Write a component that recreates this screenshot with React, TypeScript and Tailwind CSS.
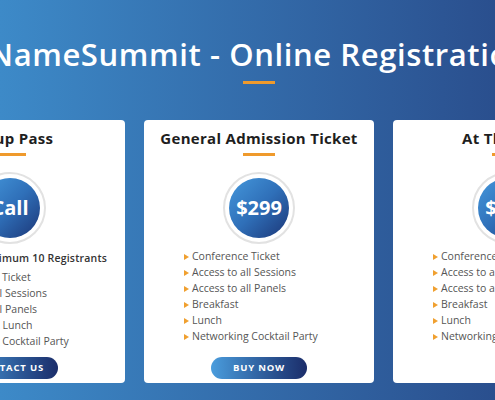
import React from "react";

const font = { fontFamily: '"Open Sans", "Liberation Sans", sans-serif' };

function Bullet() {
  return (
    <svg width="5" height="6" viewBox="0 0 5 6" className="shrink-0">
      <polygon points="0,0 5,3 0,6" fill="#f0a030" />
    </svg>
  );
}

type CardProps = {
  title: string;
  price: string;
  items: string[];
  lead?: string;
  button?: string;
};

function Card({ title, price, items, lead, button }: CardProps) {
  return (
    <div className="w-[230px] h-[263px] shrink-0 bg-white rounded-[4px] flex flex-col items-center">
      <div className="mt-[8px] text-[15px] font-bold tracking-[0.3px] text-[#1e1e1e] leading-[20px] whitespace-nowrap">{title}</div>
      <div className="mt-[5px] w-[32px] h-[3px] bg-[#ef9a2c]" />
      <div className="mt-[16px] w-[72px] h-[72px] rounded-full border-[2px] border-[#e2e2e2] bg-white flex items-center justify-center">
        <div className="w-[60px] h-[60px] rounded-full bg-linear-to-br from-[#4598dc] via-[#2f6fb8] to-[#1c3778] flex items-center justify-center">
          <span className="text-white text-[20px] font-bold leading-none">{price}</span>
        </div>
      </div>
      <div className="flex-1 w-full pl-[40px] mt-[5px]">
        {lead && (
          <div className="ml-[44px] text-[10.5px] font-semibold tracking-[0.2px] text-[#333] leading-[16px] mt-[1px] mb-[4px] whitespace-nowrap">{lead}</div>
        )}
        <ul className="flex flex-col">
          {items.map((t) => (
            <li key={t} className="flex items-center gap-[3px] h-[16px] text-[10.5px] text-[#555] font-medium whitespace-nowrap">
              <Bullet />
              <span>{t}</span>
            </li>
          ))}
        </ul>
      </div>
      {button ? (
        <div className="mb-[4px] w-[96px] h-[22px] rounded-full bg-linear-to-r from-[#4a9ddd] to-[#1b2d6a] flex items-center justify-center">
          <span className="text-white text-[9.5px] font-bold tracking-[0.8px]">{button}</span>
        </div>
      ) : (
        <div className="mb-[4px] h-[22px]" />
      )}
    </div>
  );
}

export default function App() {
  const base = ["Conference Ticket", "Access to all Sessions", "Access to all Panels", "Breakfast", "Lunch", "Networking Cocktail Party"];
  return (
    <div className="w-[495px] h-[400px] overflow-hidden bg-linear-to-r from-[#3d8ac8] to-[#2a4f8e]" style={font}>
      <div className="ml-[-105px] w-[728px] flex flex-col items-center">
        <h1 className="mt-[36px] text-[31px] font-semibold tracking-[0.6px] text-white leading-[36px] whitespace-nowrap">NameSummit - Online Registration</h1>
        <div className="mt-[9px] w-[32px] h-[3px] bg-[#ef9a2c]" />
        <div className="mt-[36px] flex gap-[19px]">
          <Card
            title="Group Pass"
            price="Call"
            lead="Minimum 10 Registrants"
            items={["Conference Ticket", "Access to all Sessions", "Access to all Panels", "Breakfast & Lunch", "Networking Cocktail Party"]}
            button="CONTACT US"
          />
          <Card title="General Admission Ticket" price="$299" items={base} button="BUY NOW" />
          <Card title="At The Door" price="$349" items={base} />
        </div>
      </div>
    </div>
  );
}
